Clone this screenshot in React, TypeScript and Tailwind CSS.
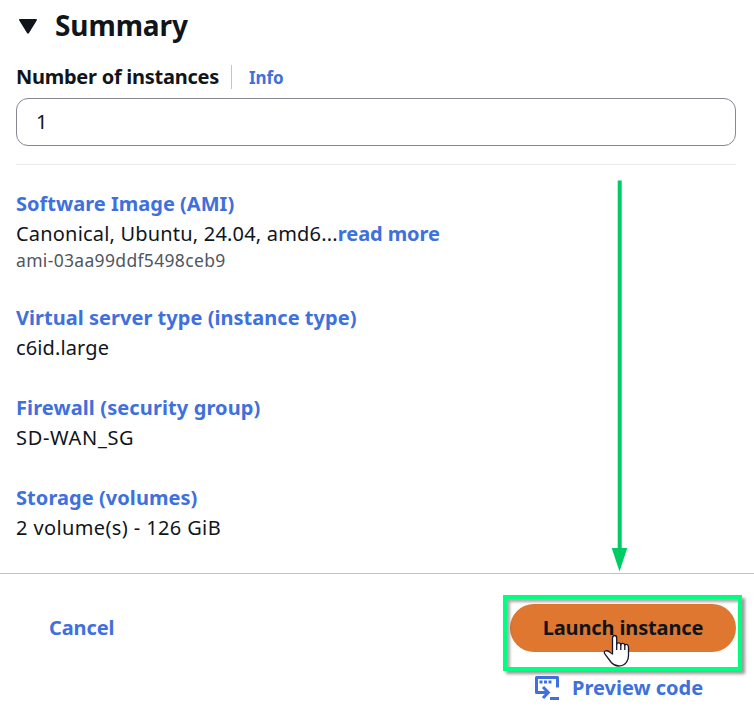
import type { ReactNode } from "react";

function Section({ title, titleClass, children }: { title: string; titleClass: string; children: ReactNode }) {
  return (
    <section className="h-[90px] first:h-[114px]">
      <h3 className={`h-[30px] w-max font-bold text-[#4070dc] ${titleClass}`}>{title}</h3>
      {children}
    </section>
  );
}

function PreviewIcon() {
  return (
    <svg width="24" height="24" viewBox="0 0 24 24" fill="none" stroke="#4070dc" strokeWidth="3">
      <path d="M6 16.5H1.5V1.5H22.5V11.5" strokeLinejoin="round" />
      <path d="M15 22.5H24" />
      <path d="M5 16.5H13M8 11L13.3 16.5L8 22" />
      <path d="M4.5 6H7.5M9 6H12M13.5 6H16.5" />
    </svg>
  );
}

function HandCursor() {
  return (
    <svg className="absolute left-[603px] top-[634px]" width="28" height="34" viewBox="0 0 28 34">
      <path
        d="M9.5 20V4Q9.5 1.5 11.6 1.5Q13.7 1.5 13.7 4V10Q14.2 8.7 16 8.9Q17.8 9 17.8 11Q18.2 9.2 20 9.4Q21.8 9.5 21.8 11.5Q22.3 10 23.8 10.4Q25.5 10.8 25.5 13.4V21.5Q25.5 25.5 23.6 28Q21 32 15.5 32Q11.5 32 8.3 28.5L2 20.2Q.5 18 2.2 17Q4.2 16.2 6.2 17.8Z"
        fill="white"
        stroke="#17172c"
        strokeWidth="1.3"
        strokeLinejoin="round"
      />
      <path d="M13.7 10V16M17.8 11V16M21.8 11.5V16" stroke="#17172c" strokeWidth="1.3" />
    </svg>
  );
}

export default function App() {
  return (
    <main className="relative h-[714px] w-[754px] overflow-hidden bg-white font-['Noto_Sans','Open_Sans',sans-serif] text-[20px] leading-[30px] text-[#10151c]">
      <div className="h-[573px] px-4">
        <header className="flex h-[52px] items-center">
          <svg className="ml-[3px] mr-[18px]" width="18" height="15" viewBox="0 0 18 15" fill="#10151c">
            <path d="M1 0H17Q18.5 0 17.7 1.5L10 14Q9 15.5 8 14L.3 1.5Q-.5 0 1 0Z" />
          </svg>
          <h2 className="pb-[2px] text-[28px] font-bold leading-[36px] tracking-[-0.1px]">Summary</h2>
        </header>
        <div className="flex h-[46px] items-center pt-1">
          <label className="w-[215px] whitespace-nowrap font-bold tracking-[-0.26px]">Number of instances</label>
          <span className="h-6 w-px bg-[#c2c4ca]" />
          <a className="ml-[17px] pt-[2px] text-[17px] font-bold tracking-[-0.1px] text-[#4070dc]">Info</a>
        </div>
        <div className="flex h-12 w-[720px] items-center rounded-[12px] border border-[#858892] px-[19px]">1</div>
        <hr className="mt-[18px] w-[720px] border-[#e8e9ed]" />
        <div className="pt-6">
          <Section title="Software Image (AMI)" titleClass="tracking-[0.02px]">
            <p className="flex h-[30px] whitespace-nowrap">
              <span className="tracking-[0.19px]">Canonical, Ubuntu, 24.04, amd6...</span>
              <a className="font-bold tracking-[-0.1px] text-[#4070dc]">read more</a>
            </p>
            <p className="h-6 w-max text-[17.5px] leading-[23px] tracking-[0.33px] text-[#51565f]">ami-03aa99ddf5498ceb9</p>
          </Section>
          <Section title="Virtual server type (instance type)" titleClass="tracking-[0.03px]">
            <p className="w-max tracking-[0.12px]">c6id.large</p>
          </Section>
          <Section title="Firewall (security group)" titleClass="tracking-[0.11px]">
            <p className="w-max tracking-[0.68px]">SD-WAN_SG</p>
          </Section>
          <Section title="Storage (volumes)" titleClass="tracking-[0.06px]">
            <p className="w-max tracking-[0.38px]">2 volume(s) - 126 GiB</p>
          </Section>
        </div>
      </div>
      <footer className="flex h-[141px] justify-between border-t border-[#c1c3c8] pl-[49px] pr-[18px] pt-[30px]">
        <a className="mt-[9px] h-[30px] font-bold tracking-[-0.12px] text-[#4070dc]">Cancel</a>
        <div className="w-[226px]">
          <button className="flex h-12 w-full items-center justify-center rounded-full bg-[#e07730] font-bold">
            <span className="whitespace-nowrap tracking-[-0.13px]">Launch instance</span>
          </button>
          <a className="mt-[21px] flex h-[30px] items-center pl-[25px] font-bold text-[#4070dc]">
            <PreviewIcon />
            <span className="ml-[13px] whitespace-nowrap">Preview code</span>
          </a>
        </div>
      </footer>
      <div className="absolute left-[503px] top-[595px] h-[76px] w-[239px] border-[4px] border-[#00ff80] shadow-[3px_3px_3px_#0006,inset_3px_3px_3px_#0005]" />
      <svg className="absolute left-[610px] top-[180px]" width="20" height="392" viewBox="0 0 20 392">
        <path d="M7.7 .5H11.7V368H17.3L9.5 391.5L1.7 368H7.7Z" fill="#00cc66" />
      </svg>
      <HandCursor />
    </main>
  );
}
